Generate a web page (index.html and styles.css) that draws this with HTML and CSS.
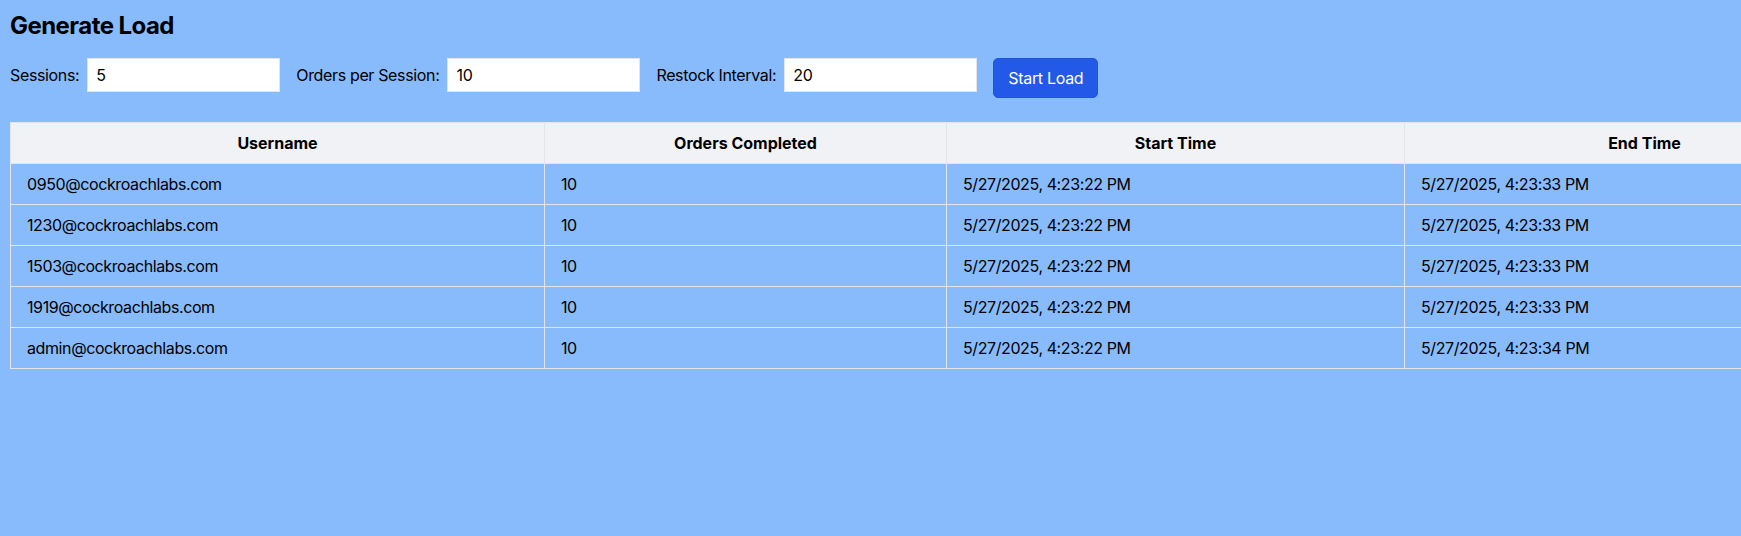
FILE: index.html
```html
<!DOCTYPE html>
<html lang="en">
<head>
<meta charset="utf-8">
<title>Generate Load</title>
<link rel="stylesheet" href="styles.css">
</head>
<body>
<div class="page">
  <h1 class="title">Generate Load</h1>
  <div class="controls">
    <div class="field">
      <label class="label" for="sessions">Sessions:</label>
      <input class="input" id="sessions" type="text" value="5">
    </div>
    <div class="field">
      <label class="label" for="orders">Orders per Session:</label>
      <input class="input" id="orders" type="text" value="10">
    </div>
    <div class="field">
      <label class="label" for="restock">Restock Interval:</label>
      <input class="input" id="restock" type="text" value="20">
    </div>
    <button class="btn" type="button">Start Load</button>
  </div>
  <div class="table-wrap">
    <table class="results">
      <colgroup>
        <col class="c1"><col class="c2"><col class="c3"><col class="c4">
      </colgroup>
      <thead>
        <tr><th>Username</th><th>Orders Completed</th><th>Start Time</th><th>End Time</th></tr>
      </thead>
      <tbody>
        <tr><td>0950@cockroachlabs.com</td><td>10</td><td>5/27/2025, 4:23:22 PM</td><td>5/27/2025, 4:23:33 PM</td></tr>
        <tr><td>1230@cockroachlabs.com</td><td>10</td><td>5/27/2025, 4:23:22 PM</td><td>5/27/2025, 4:23:33 PM</td></tr>
        <tr><td>1503@cockroachlabs.com</td><td>10</td><td>5/27/2025, 4:23:22 PM</td><td>5/27/2025, 4:23:33 PM</td></tr>
        <tr><td>1919@cockroachlabs.com</td><td>10</td><td>5/27/2025, 4:23:22 PM</td><td>5/27/2025, 4:23:33 PM</td></tr>
        <tr><td>admin@cockroachlabs.com</td><td>10</td><td>5/27/2025, 4:23:22 PM</td><td>5/27/2025, 4:23:34 PM</td></tr>
      </tbody>
    </table>
  </div>
</div>
</body>
</html>
```
FILE: styles.css
```css
html, body {
  margin: 0;
  padding: 0;
  background: #88bbfc;
  overflow: hidden;
}
body {
  font-family: Inter, "Noto Sans", "Liberation Sans", sans-serif;
  font-size: 16px;
  line-height: 24px;
  color: #000;
  letter-spacing: -0.35px;
}
.page {
  padding: 10px;
  min-height: 516px;
}
.title {
  margin: 0 0 16px 0;
  font-size: 24px;
  line-height: 32px;
  font-weight: 700;
  letter-spacing: -0.55px;
}
.controls {
  display: flex;
  align-items: flex-start;
  gap: 16px;
  margin-bottom: 24px;
}
.field {
  display: flex;
  align-items: center;
  height: 34px;
}
.label {
  margin-right: 8px;
}
.input {
  box-sizing: border-box;
  width: 193px;
  height: 34px;
  padding: 4px 8px;
  border: 1px solid #e3e5e9;
  background: #fff;
  font-family: inherit;
  font-size: 16px;
  line-height: 24px;
  letter-spacing: -0.3px;
  color: #000;
  outline: none;
}
.btn {
  box-sizing: border-box;
  height: 40px;
  padding: 8px 14px;
  border: 1px solid #1f55d8;
  border-radius: 5px;
  background: #2259e6;
  color: #fff;
  font-family: inherit;
  font-size: 16px;
  line-height: 22px;
  letter-spacing: -0.3px;
}
.table-wrap {
  width: 1874px;
}
.results {
  width: 1874px;
  border-collapse: collapse;
  table-layout: fixed;
}
.c1 { width: 534px; }
.c2 { width: 402px; }
.c3 { width: 458px; }
.c4 { width: 480px; }
.results th,
.results td {
  border: 1px solid #e3e5e9;
  padding: 8px 16px;
  line-height: 24px;
  height: 24px;
}
.results th {
  background: #f1f2f6;
  font-weight: 700;
  text-align: center;
  letter-spacing: 0;
}
.results td {
  text-align: left;
  font-weight: 400;
  letter-spacing: -0.4px;
}
```
